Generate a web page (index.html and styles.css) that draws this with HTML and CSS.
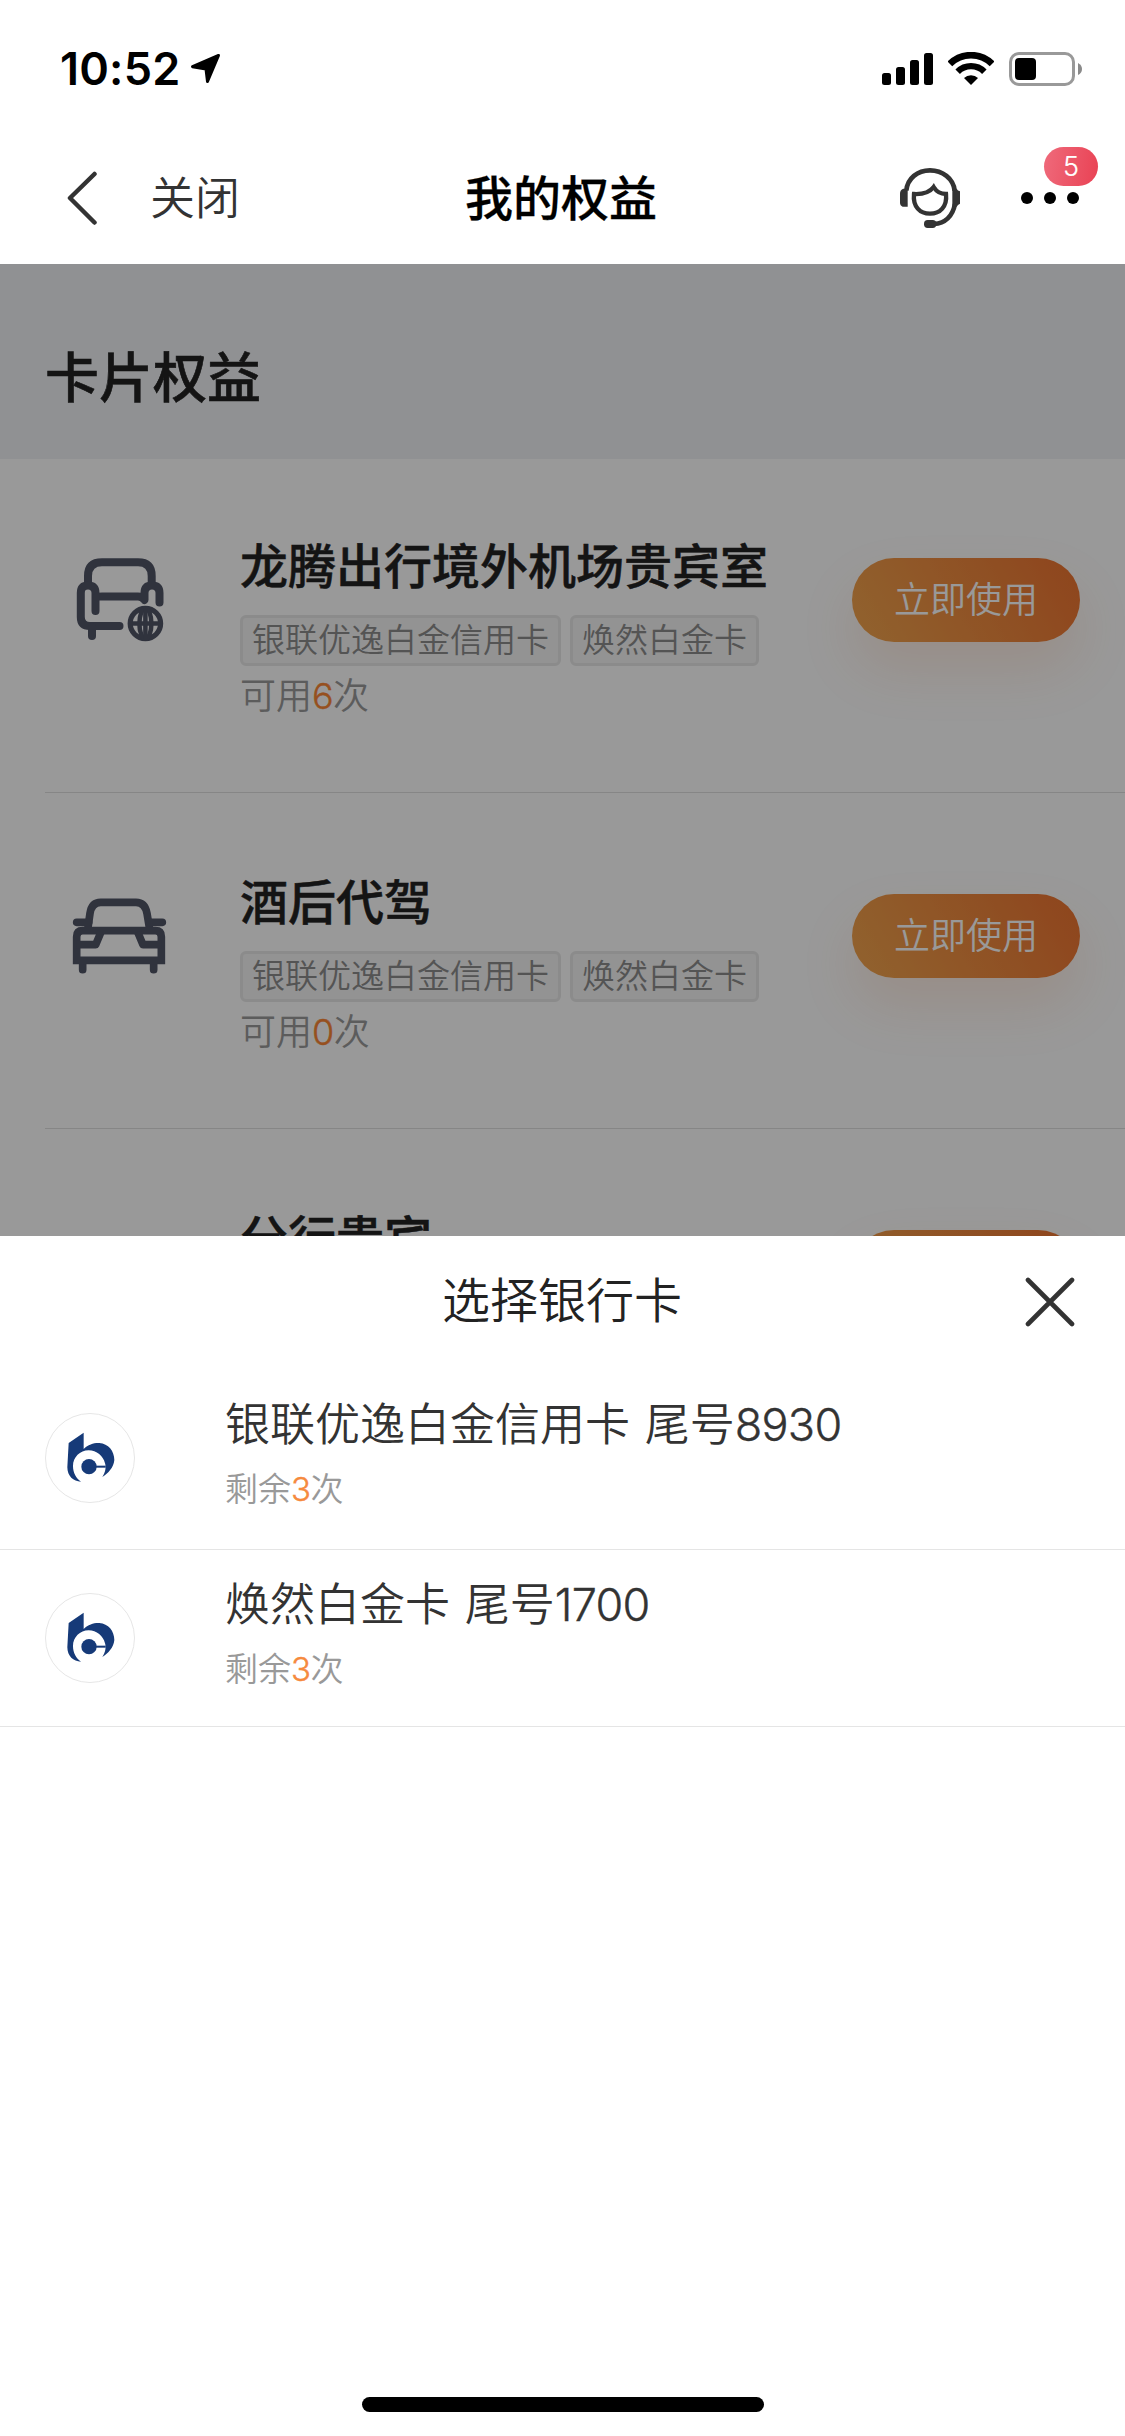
FILE: index.html
```html
<!DOCTYPE html>
<html lang="zh-CN">
<head>
<meta charset="utf-8">
<title>我的权益</title>
<link rel="stylesheet" href="styles.css">
</head>
<body>
<div class="screen">
  <div class="status-bar">
    <div class="status-left">
      <span class="clock">10:52</span>
      <svg class="location" viewBox="190 53 32 32"><path d="M218.500 55.500 L192.500 66.700 L206 69 L207.500 81.500Z" stroke="#000" stroke-width="3" stroke-linejoin="round"/></svg>
    </div>
    <div class="status-right">
      <svg class="signal" viewBox="0 0 51 32"><rect y="20" width="9" height="12" rx="2.500"/><rect x="14" y="14" width="9" height="18" rx="2.500"/><rect x="28" y="7" width="9" height="25" rx="2.500"/><rect x="42" width="9" height="32" rx="2.500"/></svg>
      <svg class="wifi" viewBox="264 96 138 99"><g fill="none" stroke="#000"><path d="M269.700 131.700 A89.500 89.500 0 0 1 396.300 131.700" stroke-width="20"/><path d="M293 155 A56.500 56.500 0 0 1 373 155" stroke-width="19"/></g><path d="M333 195 L312 174 A30 30 0 0 1 354 174Z"/></svg>
      <svg class="battery" viewBox="0 0 73 34"><rect x="1.500" y="1.500" width="63" height="31" rx="8.500" fill="none" stroke="#999" stroke-width="3"/><rect x="6" y="6" width="21" height="22" rx="4"/><path d="M69 11 Q73 13 73 17 Q73 21 69 23Z" fill="#8a8a8a"/></svg>
    </div>
  </div>

  <header class="nav">
    <div class="nav-left">
      <svg class="back" viewBox="0 0 32 54"><path d="M28.500 3 L4 27 L28.500 51.500" fill="none" stroke="#333" stroke-width="4.500" stroke-linecap="round" stroke-linejoin="round"/></svg>
      <span class="nav-close">关闭</span>
    </div>
    <h1 class="nav-title">我的权益</h1>
    <div class="nav-right">
      <svg class="service" viewBox="120 444 180 180"><g fill="none" stroke="#333" stroke-width="14"><path d="M139 512 C142 475 173 451 210 451 S280 475 284 512"/><path d="M285 552 C278 588 255 610 222 612"/><path d="M162 522 C185 523 209 517 221 501 C230 516 243 522 258 522 C262 560 240 581 210 581 S158 560 162 522Z" stroke-width="13"/></g><g fill="#333"><path d="M143 506 H130 Q120 510 120 520 V547 Q120 558 128 560 H143Z"/><path d="M277 506 H290 Q293 512 300 514 V551 Q293 554 290 560 H277Z"/><rect x="192" y="600" width="37" height="24" rx="11"/></g></svg>
      <div class="more">
        <i></i><i></i><i></i>
        <span class="badge">5</span>
      </div>
    </div>
  </header>

  <main class="benefits">
    <h2 class="benefits-head">卡片权益</h2>
    <section class="benefit first">
      <svg class="benefit-icon" viewBox="72 552 96 96"><g fill="none" stroke="#505567" stroke-width="8" stroke-linecap="round" stroke-linejoin="round"><path d="M88 583 V576 Q88 562.300 102 562.300 H138 Q151.700 562.300 151.700 576 V583"/><path d="M95.500 611 V593 Q95.500 585.500 88 585.500 Q80.800 585.500 80.800 593 V617 Q80.800 626 90 626 H119.500"/><path d="M92 627 V636"/><path d="M97 597 Q98 596.500 102 596.500 H138 Q142 596.500 144.500 600 V593 Q144.500 585.500 152 585.500 Q159.500 585.500 159.500 593 V602.500"/></g><g fill="none" stroke="#505567" stroke-width="5.200"><circle cx="145.400" cy="623.500" r="15.200"/><ellipse cx="145.400" cy="623.500" rx="6" ry="15.200" stroke-width="4.500"/><path d="M130 623.500 H161 M145.400 608 V639" stroke-width="4.500"/></g></svg>
      <div class="benefit-body">
        <h3>龙腾出行境外机场贵宾室</h3>
        <div class="tags"><span>银联优逸白金信用卡</span><span>焕然白金卡</span></div>
        <p>可用<b>6</b>次</p>
      </div>
      <button class="use">立即使用</button>
    </section>
    <section class="benefit">
      <svg class="benefit-icon" viewBox="96 144 288 288"><g fill="none" stroke="#505567" stroke-width="23" stroke-linecap="round"><path d="M144 262 L150 220 Q155 187 182 187 H288 Q315 187 321 220 L328 262"/><path d="M110 247 H146 M328 247 H367"/><path d="M128 372 V389 M341 372 V389"/></g><g fill="none" stroke="#505567" stroke-width="23"><path d="M110 361 V290 Q110 272 128 272 H346 Q364 272 364 290 V361Z"/><path d="M110 314 H167 L183 276 M364 314 H309 L293 276" stroke-linejoin="round"/></g></svg>
      <div class="benefit-body">
        <h3>酒后代驾</h3>
        <div class="tags"><span>银联优逸白金信用卡</span><span>焕然白金卡</span></div>
        <p>可用<b>0</b>次</p>
      </div>
      <button class="use">立即使用</button>
    </section>
    <section class="benefit">
      <div class="benefit-icon"></div>
      <div class="benefit-body">
        <h3>分行贵宾</h3>
      </div>
      <button class="use">立即使用</button>
    </section>
    <div class="mask"></div>
  </main>

  <section class="sheet">
    <div class="sheet-head">
      <h2>选择银行卡</h2>
      <svg class="dismiss" viewBox="0 0 50 50"><path d="M3 3 L47 47 M47 3 L3 47" stroke="#333" stroke-width="4.600" stroke-linecap="round"/></svg>
    </div>
    <div class="card">
      <svg class="logo" viewBox="135 99 270 270"><circle cx="270" cy="234" r="133.500" fill="#fff" stroke="#e6e6e6" stroke-width="3"/><g fill="#163a78"><path d="M206 189 L251 158 V207 C265 193 283 188 298 189 C325 191 343 213 343 240 C341 262 325 280 307 291 C316 278 319 262 315 250 C310 228 290 211 266 211 C240 211 219 232 219 258 C219 278 228 295 243 305 C220 305 202 288 202 262Z"/><circle cx="267" cy="260" r="23"/><rect x="267" y="257" width="50" height="6"/></g></svg>
      <div class="card-body"><h3>银联优逸白金信用卡 尾号<span class="num">8930</span></h3><p>剩余<b>3</b>次</p></div>
    </div>
    <div class="card second">
      <svg class="logo" viewBox="135 99 270 270"><circle cx="270" cy="234" r="133.500" fill="#fff" stroke="#e6e6e6" stroke-width="3"/><g fill="#163a78"><path d="M206 189 L251 158 V207 C265 193 283 188 298 189 C325 191 343 213 343 240 C341 262 325 280 307 291 C316 278 319 262 315 250 C310 228 290 211 266 211 C240 211 219 232 219 258 C219 278 228 295 243 305 C220 305 202 288 202 262Z"/><circle cx="267" cy="260" r="23"/><rect x="267" y="257" width="50" height="6"/></g></svg>
      <div class="card-body"><h3>焕然白金卡 尾号<span class="num">1700</span></h3><p>剩余<b>3</b>次</p></div>
    </div>
    <div class="home-bar"></div>
  </section>
</div>
</body>
</html>
```
FILE: styles.css
```css
* { box-sizing: border-box; margin: 0; padding: 0; }
body { font-family: Inter, "Noto Sans CJK SC", sans-serif; font-weight: 350; background: #fff; color: #333; }
h1, h2, h3 { font-weight: 350; }
svg { display: block; flex: none; }
.screen { width: 1125px; height: 2436px; display: flex; flex-direction: column; overflow: hidden; }

.status-bar { height: 138px; flex: none; display: flex; justify-content: space-between; padding: 0 43px 0 60px; }
.status-left { display: flex; }
.clock { font-size: 45px; font-weight: 600; line-height: 138px; color: #000; width: 130px; letter-spacing: 0.2px; }
.location { width: 32px; height: 32px; margin-top: 53px; }
.status-right { display: flex; padding-top: 52px; }
.signal { width: 51px; height: 32px; margin-top: 1px; margin-right: 15px; }
.wifi { width: 46px; height: 33px; margin-right: 15px; }
.battery { width: 73px; height: 34px; }

.nav { height: 126px; flex: none; display: grid; grid-template-columns: 1fr auto 1fr; padding: 0 45px 0 66px; }
.nav-left { display: flex; }
.nav-left, .nav-right { min-width: 0; }
.back { width: 32px; height: 54px; margin-top: 33px; }
.nav-close { font-size: 45px; line-height: 121px; margin-left: 52px; color: #333; }
.nav-title { font-size: 48px; font-weight: 500; line-height: 122px; color: #000; margin-left: -24px; -webkit-text-stroke: 0.3px #000; }
.nav-right { display: flex; justify-content: flex-end; }
.service { width: 60px; height: 60px; margin-top: 30px; }
.more { position: relative; display: flex; gap: 11px; margin: 54px 1px 0 61px; }
.more i { width: 12px; height: 12px; border-radius: 50%; background: #000; }
.badge { position: absolute; left: 23px; top: -45px; width: 54px; height: 39px; border-radius: 20px; background: linear-gradient(100deg, #ef6a7b, #e94254); color: #fff; font-size: 27px; line-height: 39px; text-align: center; -webkit-text-stroke: 0.2px #fff; }

.benefits { position: relative; height: 972px; flex: none; overflow: hidden; background: #fff; }
.benefits-head { height: 195px; background: #f0f2f5; padding: 70px 45px 0; font-size: 54px; line-height: 90px; font-weight: 500; color: #222; -webkit-text-stroke: 0.6px #222; }
.benefit { display: grid; grid-template-columns: 195px 1fr 228px; align-items: start; height: 336px; margin-left: 45px; padding: 75px 45px 0 0; border-bottom: 1px solid #e0e0e0; }
.benefit.first { height: 334px; padding-top: 73px; }
.benefit-icon { width: 96px; height: 96px; margin: 20px 0 0 27px; }
.benefit h3 { font-size: 48px; line-height: 66px; padding-top: 2px; margin-bottom: -2px; font-weight: 500; color: #222; white-space: nowrap; -webkit-text-stroke: 0.5px #222; }
.tags { display: flex; gap: 9px; margin-top: 17px; }
.tags span { height: 51px; border: 3px solid #e8e8e8; border-radius: 6px; background: #f5f5f5; padding: 0 9px; font-size: 33px; line-height: 45px; color: #8c8c8c; white-space: nowrap; }
.benefit p { font-size: 36px; line-height: 50px; margin-top: 5px; color: #999; }
.benefit b, .card b { font-weight: 350; color: #f68a3e; letter-spacing: -0.6px; -webkit-text-stroke: 0.4px currentColor; }
.benefit b { color: #fa8634; }
.use { width: 228px; height: 84px; margin-top: 26px; border: 0; border-radius: 42px; background: linear-gradient(60deg, #f2a54e, #ee7a35 85%, #ec7430); box-shadow: 0 28px 54px rgba(240, 130, 60, .15); font: 350 36px/82px Inter, "Noto Sans CJK SC", sans-serif; color: #fff; }
.mask { position: absolute; inset: 0; background: rgba(0, 0, 0, .4); }

.sheet { flex: 1; display: flex; flex-direction: column; background: #fff; }
.sheet-head { height: 133px; display: grid; grid-template-columns: 1fr auto 1fr; padding-right: 50px; }
.sheet-head h2 { grid-column: 2; font-size: 48px; line-height: 129px; color: #222; margin-left: 49px; }
.dismiss { width: 50px; height: 50px; margin-top: 41px; justify-self: end; }
.card { display: flex; height: 181px; padding: 44px 45px 0; border-bottom: 1px solid #e5e5e5; }
.card.second { height: 177px; padding-top: 43px; }
.logo { width: 90px; height: 90px; }
.card-body { margin: -18px 0 0 90px; }
.card h3 { font-size: 45px; line-height: 60px; color: #333; white-space: nowrap; word-spacing: 2px; }
.num { letter-spacing: -0.7px; -webkit-text-stroke: 0.4px #333; }
.card p { font-size: 33px; line-height: 46px; margin-top: 11px; color: #999; }
.home-bar { width: 402px; height: 15px; border-radius: 8px; background: #000; margin: auto auto 24px; }
```
